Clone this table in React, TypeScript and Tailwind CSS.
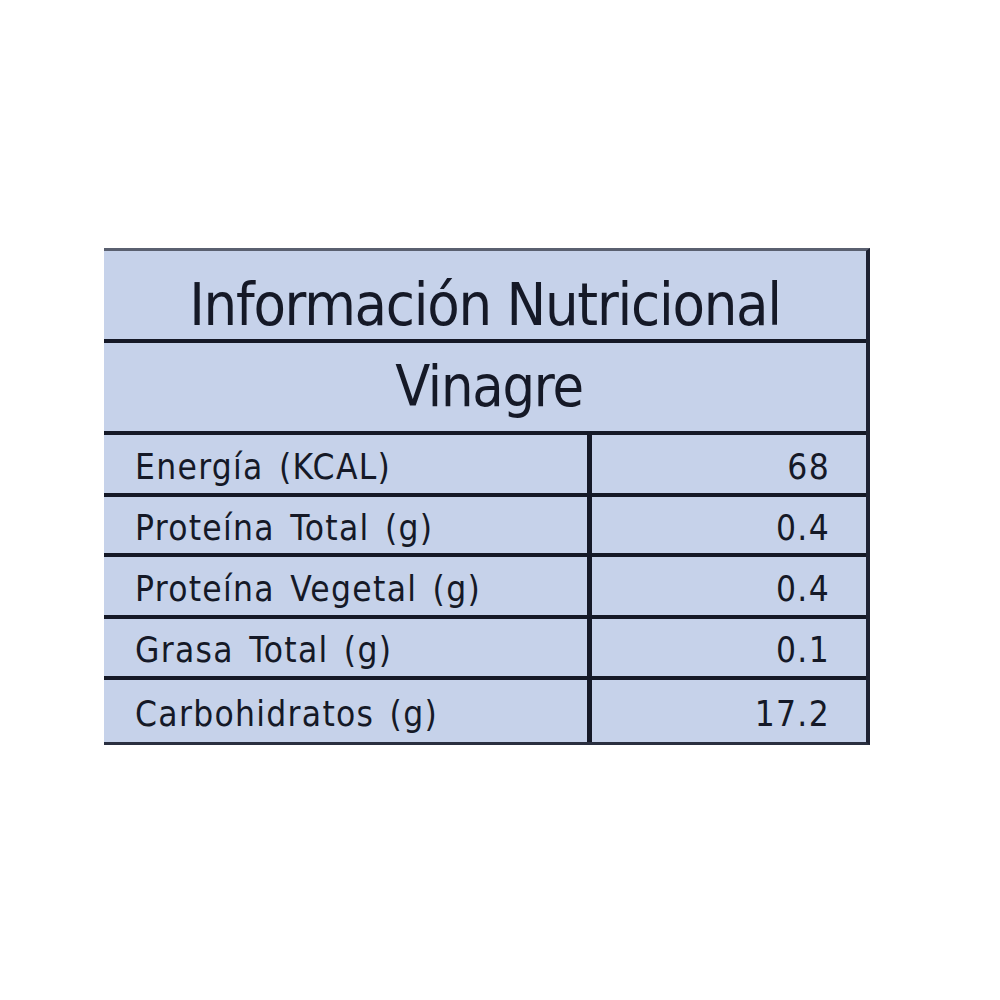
import React from "react";

const rows = [
  { label: "Energía (KCAL)", value: "68", h: "h-[62px]" },
  { label: "Proteína Total (g)", value: "0.4", h: "h-[60px]" },
  { label: "Proteína Vegetal (g)", value: "0.4", h: "h-[62px]" },
  { label: "Grasa Total (g)", value: "0.1", h: "h-[61px]" },
  { label: "Carbohidratos (g)", value: "17.2", h: "h-[62px]" },
];

export default function App() {
  return (
    <div
      className="w-[1000px] h-[1000px] bg-white pt-[248px] pl-[104px]"
      style={{ fontFamily: '"DejaVu Sans Condensed", "Liberation Sans Narrow", "DejaVu Sans", sans-serif' }}
    >
      <div className="w-[766px] bg-[#c6d2ea] text-[#151927] border-t-[3px] border-t-[#5a6070] border-r-[4px] border-r-[#1e2232] border-b-[3px] border-b-[#2a2f40]">
        <div className="h-[92px] flex items-center justify-center border-b-[4px] border-[#151927]">
          <span className="text-[59px] leading-none tracking-[-1.25px] pt-[19px]">Información Nutricional</span>
        </div>
        <div className="h-[92px] flex items-center justify-center border-b-[4px] border-[#151927]">
          <span className="text-[57px] leading-none tracking-[-1.2px] pl-[8px] pb-[2px]">Vinagre</span>
        </div>
        {rows.map((r, i) => (
          <div
            key={i}
            className={`flex ${r.h} ${i < rows.length - 1 ? "border-b-[4px] border-[#151927]" : ""}`}
          >
            <div className="w-[488px] flex items-center pl-[31px] border-r-[5px] border-[#151927]">
              <span className="text-[35px] leading-none tracking-[1.3px] [word-spacing:4px] pt-[6px]">{r.label}</span>
            </div>
            <div className="flex-1 flex items-center justify-end pr-[36px]">
              <span className="text-[35px] leading-none tracking-[1.3px] pt-[6px]">{r.value}</span>
            </div>
          </div>
        ))}
      </div>
    </div>
  );
}
